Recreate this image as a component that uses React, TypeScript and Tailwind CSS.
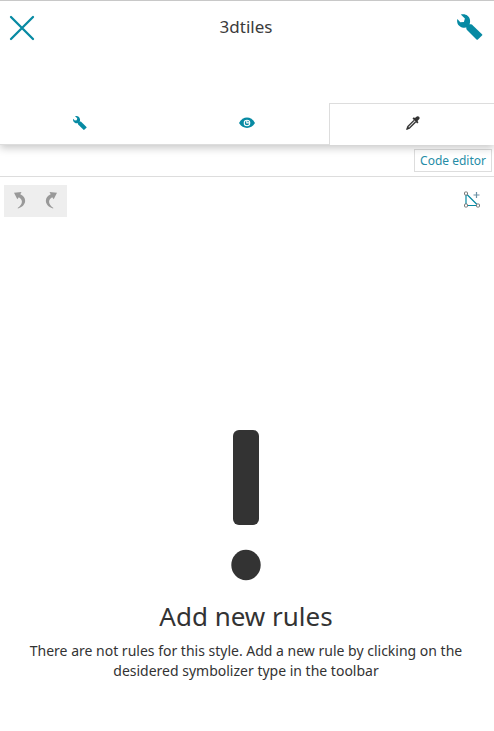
import React from "react";

function Wrench({ className }: { className: string }) {
  return (
    <svg viewBox="0 0 26 26" className={className} fill="currentColor">
      <path d="M3.800.6C8-.8 12 1.500 12.900 5.400c.4 2 .2 3.700-.5 5.300L10 13.300C6 14.600 1 12.500.3 8.400 0 7.200 0 6 .4 4.900L3.300 8.300 6.900 8 7.900 4.400z" />
      <path d="M12 10.200h2.200l.9.600 9.900 9.400q.6.700 0 1.400l-4.100 3.900q-.7.600-1.400 0l-9.500-9.400-.6-1-.2-2.400z" />
    </svg>
  );
}

function Eye() {
  return (
    <svg viewBox="0 0 16 12" className="h-3 w-4">
      <path d="M0 6C4-1.300 12-1.300 16 6 12 12.500 4 12.500 0 6z" fill="#078aa3" />
      <circle cx="8" cy="6" r="3.300" fill="#fff" />
      <circle cx="8" cy="6" r="2.200" fill="#078aa3" />
      <path d="M7.200 3.500h1.200v1.800h1.800v1.200h-3z" fill="#fff" />
    </svg>
  );
}

function Eyedropper() {
  return (
    <svg viewBox="0 0 14 14" className="size-3.5">
      <path d="M8 4.400L2 10.400 1.300 12.700 3.600 12 9.600 6" fill="#ddd" stroke="#333" strokeWidth="1.300" />
      <path d="M.6 13.500L1.500 10.700 3.300 12.500z" fill="#333" stroke="#333" strokeWidth=".5" />
      <path d="M6.500 2.500l1.300-1.200 1.100.8L10.800.6Q11.900-.2 13.100.8q1 1.200.2 2.300l-1.800 1.800 1 1.300-1.300 1.300z" fill="#333" />
    </svg>
  );
}

function Turn({ className }: { className: string }) {
  return (
    <svg viewBox="0 0 12 17" className={className} fill="#999">
      <path d="M0 .8L7.500 0 6.300 2.300C13 5 13.200 13.500 4 16.500L3.600 15.900C9.300 12.300 9 7.500 4.800 5.200L3.300 7.300z" />
    </svg>
  );
}

export default function App() {
  return (
    <div className="flex h-[731px] w-[494px] flex-col overflow-hidden border-t border-[#c8c8c8] bg-white font-['Noto_Sans',sans-serif] text-[#333]">
      <header className="z-20 flex h-[102px] shrink-0 items-start justify-between bg-white pl-[9px] pr-[11px] pt-[13px] text-[#078aa3]">
        <svg viewBox="0 0 26 26" className="mt-px size-[26px]" stroke="currentColor" strokeWidth="2.300" strokeLinecap="round">
          <path d="M2 2l22 22M24 2L2 24" />
        </svg>
        <h1 className="text-[17px] leading-[26px] text-[#3b3b3b]">3dtiles</h1>
        <Wrench className="size-[26px]" />
      </header>

      <nav className="z-10 flex h-[42px] shrink-0 shadow-[0_3px_8px_rgba(0,0,0,0.22)]">
        <div className="flex w-[329px] border-b border-[#ddd] bg-white text-[#078aa3]">
          <button className="flex flex-1 items-center justify-center pb-0.5 pr-[7px]">
            <Wrench className="size-[14px]" />
          </button>
          <button className="flex flex-1 items-center justify-center pb-0.5 pr-0.5"><Eye /></button>
        </div>
        <button className="flex flex-1 items-center justify-center border-l border-t border-[#ddd] bg-white pb-[3px] pl-0.5"><Eyedropper /></button>
      </nav>

      <div className="flex h-8 shrink-0 items-start justify-end border-b border-[#ddd] pr-0.5 pt-1">
        <button className="h-[23px] w-[78px] border border-[#ddd] bg-white text-[12px] leading-[21px] text-[#258ca6]">Code editor</button>
      </div>

      <div className="flex h-10 shrink-0 items-end justify-between pl-1 pr-[13px]">
        <div className="flex h-8 w-[63px] items-center justify-between bg-[#eee] px-2.5 pb-0.5">
          <Turn className="h-[17px] w-3" />
          <Turn className="h-[17px] w-3 -scale-x-100" />
        </div>
        <svg viewBox="0 0 18 18" className="mb-2 size-[18px]" fill="none">
          <path d="M3 2.500v12h12z" stroke="#078aa3" strokeWidth="1.200" />
          <path d="M13.500 1v6M10.500 4h6" stroke="#6c91a5" strokeWidth="1.200" />
          <g fill="#fff" stroke="#777">
            <rect x="1.500" y="1" width="3" height="3" rx=".7" />
            <rect x="1.500" y="13" width="3" height="3" rx=".7" />
            <rect x="13.500" y="13" width="3" height="3" rx=".7" />
          </g>
        </svg>
      </div>

      <main className="flex flex-1 flex-col items-center pr-0.5 pt-[213px] text-center">
        <svg viewBox="0 0 30 151" className="h-[151px] w-[30px] shrink-0" fill="#333">
          <rect x="2" y="0" width="26" height="95" rx="6" />
          <ellipse cx="15" cy="135" rx="14.700" ry="15.200" />
        </svg>
        <h2 className="mt-[17px] text-[26px] leading-[36px]">Add new rules</h2>
        <p className="mt-[7px] w-[450px] text-[14px] leading-5">
          There are not rules for this style. Add a new rule by clicking on the<br />desidered symbolizer type in the toolbar
        </p>
      </main>
    </div>
  );
}
